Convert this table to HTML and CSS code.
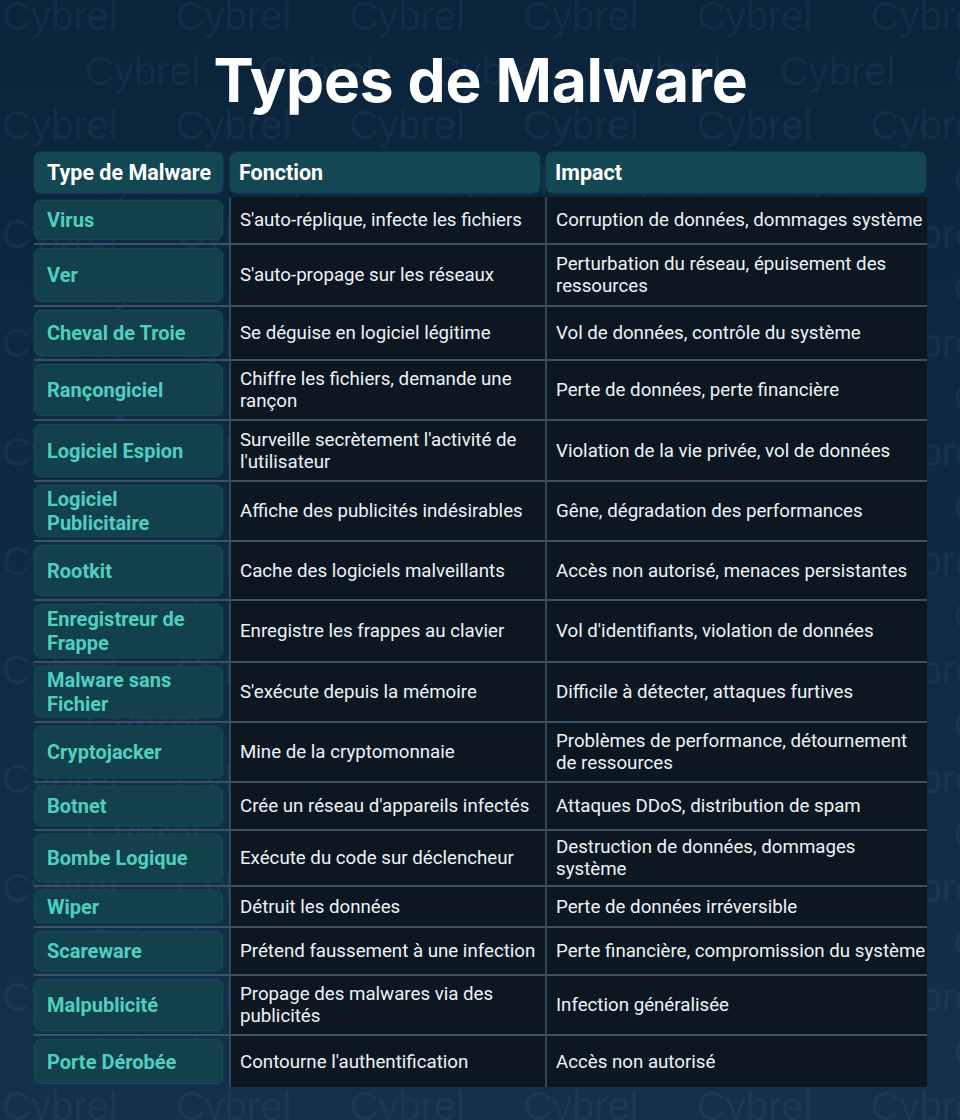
FILE: index.html
```html
<!DOCTYPE html>
<html lang="fr">
<head>
<meta charset="utf-8">
<title>Types de Malware</title>
<link rel="stylesheet" href="styles.css">
</head>
<body>
<div class="page">
  <div class="watermark" aria-hidden="true">
    <div class="wm-row">Cybrel Cybrel Cybrel Cybrel Cybrel Cybrel</div>
    <div class="wm-row wm-offset">Cybrel Cybrel Cybrel Cybrel Cybrel Cybrel</div>
    <div class="wm-row">Cybrel Cybrel Cybrel Cybrel Cybrel Cybrel</div>
    <div class="wm-row wm-offset">Cybrel Cybrel Cybrel Cybrel Cybrel Cybrel</div>
    <div class="wm-row">Cybrel Cybrel Cybrel Cybrel Cybrel Cybrel</div>
    <div class="wm-row wm-offset">Cybrel Cybrel Cybrel Cybrel Cybrel Cybrel</div>
    <div class="wm-row">Cybrel Cybrel Cybrel Cybrel Cybrel Cybrel</div>
    <div class="wm-row wm-offset">Cybrel Cybrel Cybrel Cybrel Cybrel Cybrel</div>
    <div class="wm-row">Cybrel Cybrel Cybrel Cybrel Cybrel Cybrel</div>
    <div class="wm-row wm-offset">Cybrel Cybrel Cybrel Cybrel Cybrel Cybrel</div>
    <div class="wm-row">Cybrel Cybrel Cybrel Cybrel Cybrel Cybrel</div>
    <div class="wm-row wm-offset">Cybrel Cybrel Cybrel Cybrel Cybrel Cybrel</div>
    <div class="wm-row">Cybrel Cybrel Cybrel Cybrel Cybrel Cybrel</div>
    <div class="wm-row wm-offset">Cybrel Cybrel Cybrel Cybrel Cybrel Cybrel</div>
    <div class="wm-row">Cybrel Cybrel Cybrel Cybrel Cybrel Cybrel</div>
    <div class="wm-row wm-offset">Cybrel Cybrel Cybrel Cybrel Cybrel Cybrel</div>
    <div class="wm-row">Cybrel Cybrel Cybrel Cybrel Cybrel Cybrel</div>
    <div class="wm-row wm-offset">Cybrel Cybrel Cybrel Cybrel Cybrel Cybrel</div>
    <div class="wm-row">Cybrel Cybrel Cybrel Cybrel Cybrel Cybrel</div>
    <div class="wm-row wm-offset">Cybrel Cybrel Cybrel Cybrel Cybrel Cybrel</div>
    <div class="wm-row">Cybrel Cybrel Cybrel Cybrel Cybrel Cybrel</div>
  </div>

  <main class="content">
    <h1 class="title">Types de Malware</h1>

    <div class="table">
      <div class="th th-type">Type de Malware</div>
      <div class="th th-func">Fonction</div>
      <div class="th th-impact">Impact</div>

      <div class="name"><span class="name-box">Virus</span></div>
      <div class="cell">S'auto-réplique, infecte les fichiers</div>
      <div class="cell cell-impact">Corruption de données, dommages système</div>

      <div class="name"><span class="name-box">Ver</span></div>
      <div class="cell">S'auto-propage sur les réseaux</div>
      <div class="cell cell-impact">Perturbation du réseau, épuisement des<br>ressources</div>

      <div class="name"><span class="name-box">Cheval de Troie</span></div>
      <div class="cell">Se déguise en logiciel légitime</div>
      <div class="cell cell-impact">Vol de données, contrôle du système</div>

      <div class="name"><span class="name-box">Rançongiciel</span></div>
      <div class="cell">Chiffre les fichiers, demande une<br>rançon</div>
      <div class="cell cell-impact">Perte de données, perte financière</div>

      <div class="name"><span class="name-box">Logiciel Espion</span></div>
      <div class="cell">Surveille secrètement l'activité de<br>l'utilisateur</div>
      <div class="cell cell-impact">Violation de la vie privée, vol de données</div>

      <div class="name"><span class="name-box">Logiciel<br>Publicitaire</span></div>
      <div class="cell">Affiche des publicités indésirables</div>
      <div class="cell cell-impact">Gêne, dégradation des performances</div>

      <div class="name"><span class="name-box">Rootkit</span></div>
      <div class="cell">Cache des logiciels malveillants</div>
      <div class="cell cell-impact">Accès non autorisé, menaces persistantes</div>

      <div class="name"><span class="name-box">Enregistreur de<br>Frappe</span></div>
      <div class="cell">Enregistre les frappes au clavier</div>
      <div class="cell cell-impact">Vol d'identifiants, violation de données</div>

      <div class="name"><span class="name-box">Malware sans<br>Fichier</span></div>
      <div class="cell">S'exécute depuis la mémoire</div>
      <div class="cell cell-impact">Difficile à détecter, attaques furtives</div>

      <div class="name"><span class="name-box">Cryptojacker</span></div>
      <div class="cell">Mine de la cryptomonnaie</div>
      <div class="cell cell-impact">Problèmes de performance, détournement<br>de ressources</div>

      <div class="name"><span class="name-box">Botnet</span></div>
      <div class="cell">Crée un réseau d'appareils infectés</div>
      <div class="cell cell-impact">Attaques DDoS, distribution de spam</div>

      <div class="name"><span class="name-box">Bombe Logique</span></div>
      <div class="cell">Exécute du code sur déclencheur</div>
      <div class="cell cell-impact">Destruction de données, dommages<br>système</div>

      <div class="name"><span class="name-box">Wiper</span></div>
      <div class="cell">Détruit les données</div>
      <div class="cell cell-impact">Perte de données irréversible</div>

      <div class="name"><span class="name-box">Scareware</span></div>
      <div class="cell">Prétend faussement à une infection</div>
      <div class="cell cell-impact">Perte financière, compromission du système</div>

      <div class="name"><span class="name-box">Malpublicité</span></div>
      <div class="cell">Propage des malwares via des<br>publicités</div>
      <div class="cell cell-impact">Infection généralisée</div>

      <div class="name last"><span class="name-box">Porte Dérobée</span></div>
      <div class="cell last">Contourne l'authentification</div>
      <div class="cell cell-impact last">Accès non autorisé</div>
    </div>
  </main>
</div>
</body>
</html>
```

FILE: styles.css
```css
* {
  box-sizing: border-box;
}

html, body {
  margin: 0;
  padding: 0;
}

body {
  background: #0f2a42;
}

.page {
  position: relative;
  width: 960px;
  height: 1120px;
  overflow: hidden;
  background: linear-gradient(180deg, #0b243c 0%, #0e2a43 45%, #12314a 100%);
  font-family: Roboto, "Liberation Sans", sans-serif;
}

/* background watermark layer */
.watermark {
  position: absolute;
  left: 0;
  top: -11px;
  right: 0;
  bottom: 0;
  z-index: 0;
  font-family: "Liberation Sans", Arial, sans-serif;
  font-size: 40px;
  line-height: 54.5px;
  color: rgba(150, 190, 220, 0.07);
  white-space: nowrap;
  word-spacing: 47px;
}

.wm-row {
  padding-left: 2px;
}

.wm-row.wm-offset {
  padding-left: 85px;
}

.content {
  position: relative;
  z-index: 1;
  padding: 46px 33px 0 34px;
}

.title {
  margin: 0 0 38px;
  font-family: Inter, "Liberation Sans", sans-serif;
  font-weight: 700;
  font-size: 60.5px;
  line-height: 68px;
  color: #ffffff;
  text-align: center;
  letter-spacing: -0.2px;
}

.table {
  display: grid;
  grid-template-columns: 195px 316px 382px;
  grid-template-rows: 45px 48px 62px 54px 60px 61px 60px 59px 62px 60px 60px 48px 56px 41px 48px 60px 51px;
}

.th {
  align-self: start;
  height: 41px;
  display: flex;
  align-items: center;
  background: #134753;
  border-radius: 7px;
  color: #ffffff;
  font-weight: 700;
  font-size: 21.5px;
  padding-left: 12px;
  box-shadow: 0 0 0 1px rgba(40, 110, 120, 0.2);
}

.th-type {
  margin-right: 6px;
  padding-left: 13px;
}

.th-func {
  margin: 0 5px 0 1px;
  padding-left: 9px;
}

.th-impact {
  margin: 0 1px 0 1px;
  padding-left: 9px;
}

.name {
  display: flex;
  padding: 3px 6px 3px 0;
  border-bottom: 2px solid #3e5264;
}

.name-box {
  flex: 1;
  display: flex;
  align-items: center;
  padding-left: 12px;
  background: #12404b;
  border: 1px solid #184b57;
  border-radius: 7px;
  box-shadow: 0 0 4px rgba(30, 110, 120, 0.2);
  color: #4fcfc2;
  font-weight: 700;
  font-size: 20px;
  line-height: 24px;
}

.cell {
  display: flex;
  align-items: center;
  padding-left: 9px;
  background: #0c1722;
  border-left: 2px solid #33485a;
  border-bottom: 2px solid #3e5264;
  color: #eef3f6;
  font-size: 18.7px;
  line-height: 22px;
  white-space: nowrap;
}

.cell-impact {
  padding-left: 9px;
}

.last {
  border-bottom: none;
}
```
